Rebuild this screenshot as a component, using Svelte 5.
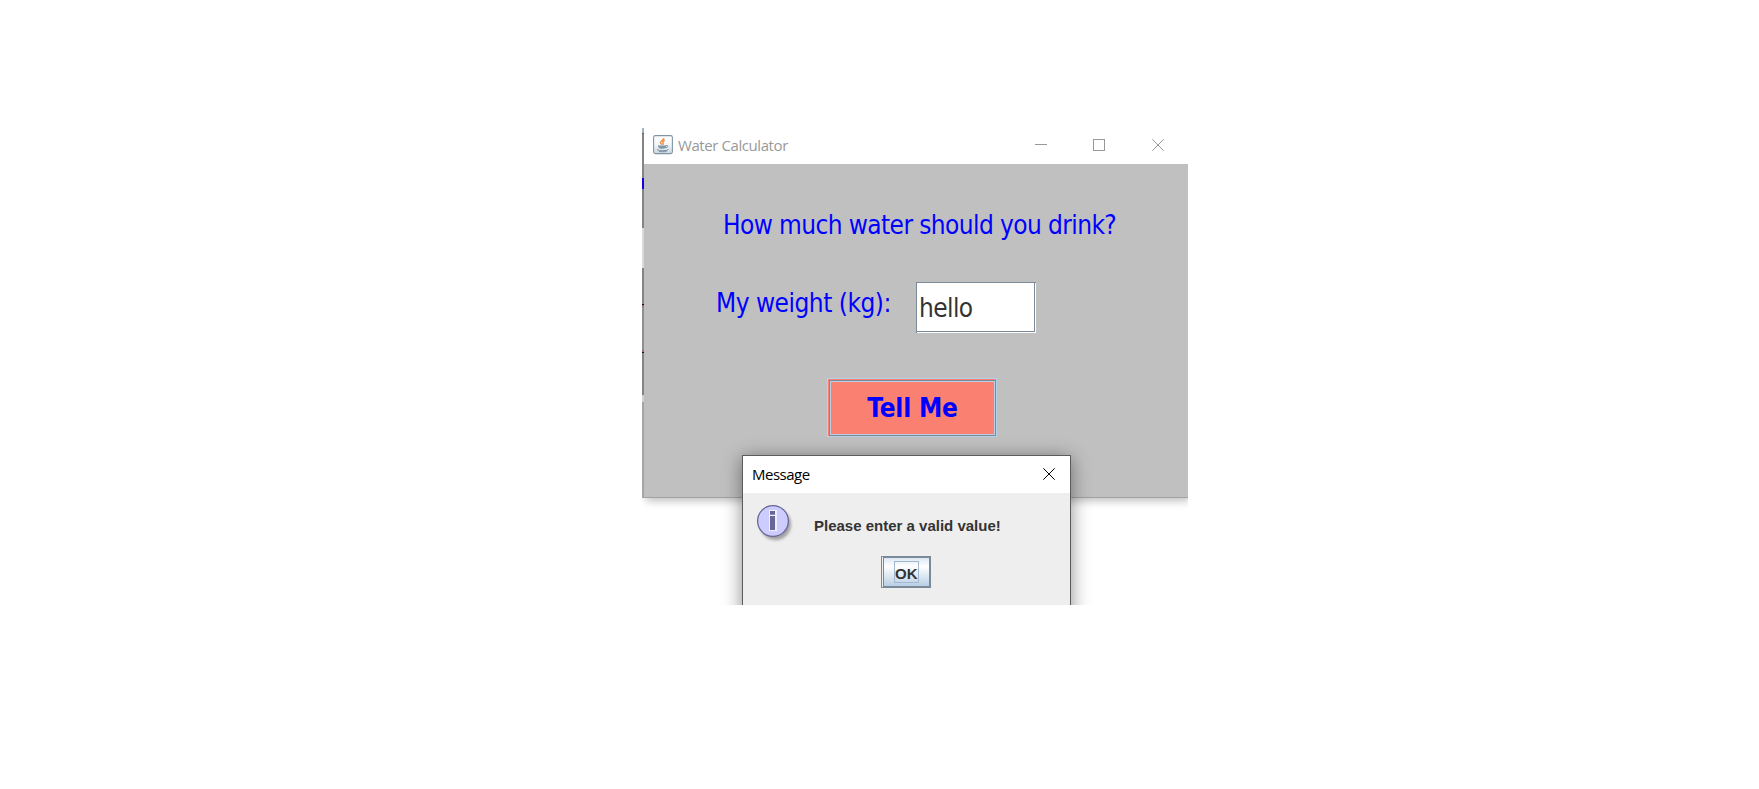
<script>
  const rows = { question: 'How much water should you drink?', label: 'My weight (kg):' };
  let weight = 'hello';
</script>

<main>
  <section class="capture">
    <div class="behind"></div>
    <div class="window">
      <header class="titlebar">
        <svg class="java" width="20" height="20" viewBox="0 0 20 20">
          <defs>
            <linearGradient id="jg" x1="0" y1="0" x2="0" y2="1">
              <stop offset="0" stop-color="#fff" /><stop offset="0.5" stop-color="#f4f6f8" /><stop offset="1" stop-color="#ccd6df" />
            </linearGradient>
          </defs>
          <rect x="0.6" y="0.6" width="18.8" height="18" rx="1.8" fill="url(#jg)" stroke="#8295a6" stroke-width="1.1" />
          <path d="M10.800 3C11.200 5.200 7.200 5.800 7.400 7.600c.1 1 1.300 1.400 1.800 2.100M11.800 5.300C9.700 6.300 9.300 7.300 10.100 8.200c.4.5.2 1.100-.2 1.500" fill="none" stroke="#ee9450" stroke-width="1.500" />
          <path d="M5 10c2 .8 6.500.8 8.500 0l-.7 2.900c-1.500 1-5.600 1-7.100 0z" fill="#7e96aa" />
          <path d="M13.300 10.500c2.300-.6 2.100 1.800-.3 2.200M4 14.600c2.500 1.600 9 1.600 11.500 0M6 16.400c2 .4 5 .4 7.500 0" fill="none" stroke="#7890a5" stroke-width="1" />
        </svg>
        <span class="title">Water Calculator</span>
        <svg class="controls" width="129" height="12" viewBox="0 0 129 12" fill="none" stroke="#999">
          <path d="M0 5.500h12M58.500.5h11v11h-11z" shape-rendering="crispEdges" />
          <path d="M117.300.3l11.400 11.400M128.700.3l-11.400 11.400" />
        </svg>
      </header>
      <div class="form">
        <div class="question"><span>{rows.question}</span></div>
        <div class="entry">
          <span class="label">{rows.label}</span>
          <div class="field"><div class="value"><span>{weight}</span></div></div>
        </div>
        <div class="tell"><div class="ring"><div class="face"><span>Tell Me</span></div></div></div>
      </div>
    </div>
    <div class="dialog">
      <header class="dialogbar">
        <span>Message</span>
        <svg width="12" height="12" viewBox="0 0 12 12" fill="none" stroke="#000"><path d="M.3.3l11.400 11.400M11.700.3L.3 11.700" /></svg>
      </header>
      <div class="message">
        <svg class="info" width="38" height="40" viewBox="0 0 38 40">
          <circle cx="18.500" cy="19.500" r="15.500" fill="#000" opacity=".32" class="soft" />
          <circle cx="16" cy="16" r="15.400" fill="#ccccff" stroke="#666699" stroke-width="1.300" />
          <path d="M12 5h8v21h-8z" fill="#eeeeff" />
          <path d="M13 6h5v3.700h-5zM13 11h5v14h-5z" fill="#666699" />
        </svg>
        <span class="text">Please enter a valid value!</span>
      </div>
      <div class="ok"><div class="okface"><div class="focus"><span>OK</span></div></div></div>
    </div>
  </section>
</main>

<style>
  :global(body) { margin: 0; background: #fff; overflow: hidden; }
  main { width: 1759px; height: 789px; box-sizing: border-box; padding: 128px 0 0 642px; background: #fff; }
  main * { box-sizing: border-box; }
  span { white-space: nowrap; display: block; }
  .capture { width: 546px; height: 477px; position: relative; overflow: hidden; display: flex; align-items: flex-start; background: #fff; }
  .behind {
    width: 2px; height: 370px; flex: none;
    background: linear-gradient(#a9b7c2 0 5px, #666 5px 6px, #8d8d8d 6px 50px, #1500f0 50px 61px, #8d8d8d 61px 100px, #e8e8e8 100px 140px, #8d8d8d 140px 176px, #111 176px 177px, #a87474 177px 179px, #999 179px 222px, #a87474 222px 224px, #111 224px 225px, #8d8d8d 225px 267px, #ddd 267px 274px, #b0b0b0 274px);
  }
  .window { width: 544px; height: 370px; flex: none; border-bottom: 1px solid #a2a2a2; box-shadow: 2px 3px 8px rgba(0,0,0,.25); background: #c0c0c0; }
  .titlebar { height: 36px; background: #fff; display: flex; align-items: flex-start; padding: 7px 24px 0 9px; }
  .java { flex: none; }
  .title { margin: 0 auto 0 5px; width: 200px; font: 15px/20px "Open Sans", "Noto Sans", sans-serif; color: #999; letter-spacing: -.42px; }
  .controls { margin-top: 4px; flex: none; }
  .form { font: 26px/34px "DejaVu Sans Condensed", "Noto Sans", sans-serif; color: #00f; height: 333px; letter-spacing: -.6px; }
  .question { height: 118px; padding: 44px 0 0 79px; }
  .entry { display: flex; padding: 0 0 0 72px; align-items: flex-start; }
  .label { width: 200px; padding-top: 4px; letter-spacing: -.5px; }
  .field { width: 120px; height: 51px; border: solid #7a8a99; border-width: 1px 0 0 1px; background: #fff; padding: 0 1px 1px 0; }
  .value { height: 49px; border: solid #7a8a99; border-width: 0 1px 1px 0; color: #333; padding: 8px 0 0 2px; }
  .tell { margin: 45px 0 0 183px; width: 170px; height: 59px; background: #fa8072; border: 1px solid #b8cfe5; padding: 1px 0 0 1px; }
  .ring { height: 56px; width: 167px; border: 1px solid #7a8a99; }
  .face { height: 54px; border: 1px solid #b8cfe5; font-weight: 700; display: flex; justify-content: center; padding-top: 9px; letter-spacing: -.2px; }
  .dialog { position: absolute; left: 100px; top: 327px; width: 329px; height: 190px; border: 1px solid #5c5c5c; background: #eee; box-shadow: 0 3px 18px rgba(0,0,0,.45); }
  .dialogbar { height: 37px; background: #fff; display: flex; justify-content: space-between; padding: 8px 15px 0 9px; font: 15px/21px "Open Sans", "Noto Sans", sans-serif; color: #000; letter-spacing: -.5px; }
  .dialogbar svg { margin-top: 4px; }
  .message { height: 63px; display: flex; padding: 12px 0 0 14px; font: bold 15px/18px "Liberation Sans", sans-serif; color: #333; }
  .info { flex: none; overflow: visible; }
  .soft { filter: blur(1.5px); }
  .text { margin: 12px 0 0 19px; }
  .ok { width: 50px; height: 32px; margin-left: 138px; border: 1px solid #7a8a99; padding-left: 1px; background: #eee; }
  .okface { height: 30px; border: 1px solid #7a8a99; background: linear-gradient(#dde8f3, #fff 30%, #b8cfe5); padding: 3px 0 0 10px; }
  .focus { width: 25px; height: 22px; border: 1px solid #a3b8cc; font: bold 15px/18px "Liberation Sans", sans-serif; color: #333; padding: 3px 0 0 0; }
</style>
